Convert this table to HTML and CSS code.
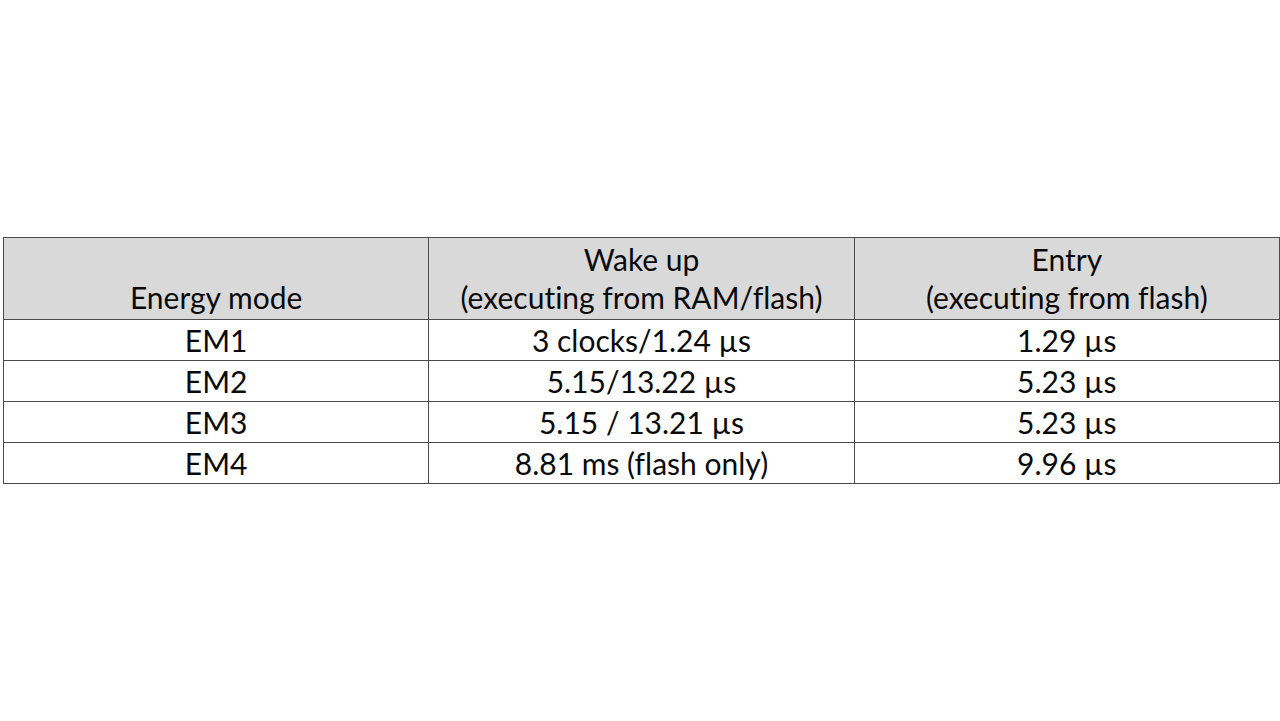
FILE: index.html
```html
<!DOCTYPE html>
<html>
<head>
<meta charset="utf-8">
<link rel="stylesheet" href="styles.css">
</head>
<body>
<div class="page">
<table class="modes">
  <thead>
    <tr>
      <th>Energy mode</th>
      <th>Wake up<br>(executing from RAM/flash)</th>
      <th>Entry<br>(executing from flash)</th>
    </tr>
  </thead>
  <tbody>
    <tr><td>EM1</td><td>3 clocks/1.24 µs</td><td>1.29 µs</td></tr>
    <tr><td>EM2</td><td>5.15/13.22 µs</td><td>5.23 µs</td></tr>
    <tr><td>EM3</td><td>5.15 / 13.21 µs</td><td>5.23 µs</td></tr>
    <tr><td>EM4</td><td>8.81 ms (flash only)</td><td>9.96 µs</td></tr>
  </tbody>
</table>
</div>
</body>
</html>
```
FILE: styles.css
```css
html, body {
  margin: 0;
  padding: 0;
  background: #ffffff;
}
.page {
  width: 1280px;
  height: 721px;
  padding: 237px 0 0 3px;
  box-sizing: border-box;
}
.modes {
  border-collapse: collapse;
  width: 1277px;
  table-layout: fixed;
  font-family: Lato, "Liberation Sans", sans-serif;
  font-size: 30px;
  font-variant-ligatures: none;
  font-feature-settings: "liga" 0, "clig" 0;
  color: #0a0a0a;
}
.modes th, .modes td {
  border: 1px solid #4a4a4a;
  text-align: center;
  padding: 0;
  font-weight: normal;
}
.modes th {
  background: #d9d9d9;
  height: 78px;
  line-height: 38px;
  vertical-align: bottom;
  padding-bottom: 3px;
}
.modes td {
  height: 40px;
  line-height: 40px;
}
```
